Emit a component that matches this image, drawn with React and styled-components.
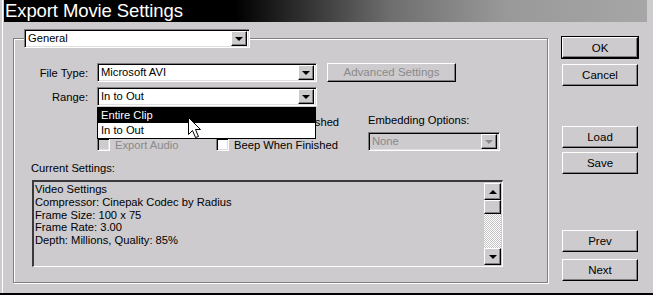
import React from 'react';
import styled, { createGlobalStyle, css } from 'styled-components';

const GlobalStyle = createGlobalStyle`
  html, body {
    margin: 0;
    padding: 0;
    background: #cdcbce;
  }
  body {
    font-family: "Liberation Sans", Arial, sans-serif;
    font-size: 11.2px;
    color: #000;
  }
`;

const BG = '#cdcbce';

const raised = css`
  border: 1px solid;
  border-color: #fff #000 #000 #fff;
  box-shadow: inset -1px -1px 0 #808080;
`;

const sunken = css`
  border: 1px solid;
  border-color: #808080 #fff #fff #808080;
  box-shadow: inset 1px 1px 0 #000, inset -1px -1px 0 #dfdfdf;
`;

const Window = styled.div`
  width: 653px;
  height: 295px;
  box-sizing: border-box;
  padding: 0 6px 0 4px;
  background: ${BG};
  box-shadow: inset 2px 0 0 ${BG}, inset 3px 0 0 #fff;
  border-bottom: 2px solid #000;
  display: flex;
  flex-direction: column;
`;

const TitleBar = styled.div`
  height: 22px;
  display: flex;
  align-items: center;
  padding-left: 1px;
  background: linear-gradient(to right, #000 0%, #000 36%, #6e6e6e 60%, #999 78%, #a6a6a6 100%);
`;

const Title = styled.span`
  color: #fff;
  font-size: 18.5px;
  letter-spacing: -0.1px;
  line-height: 22px;
`;

const Body = styled.div`
  flex: 1;
  display: flex;
  padding-left: 9px;
`;

const Group = styled.div`
  width: 535px;
  box-sizing: border-box;
  margin-top: 16px;
  height: 245px;
  border: 1px solid #808080;
  box-shadow: inset 1px 1px 0 #fff, 1px 1px 0 #fff;
  display: flex;
  flex-direction: column;
`;

const Header = styled.div`
  margin: -10px 0 0 10px;
`;

const SelectBox = styled.div`
  ${sunken};
  box-sizing: border-box;
  width: ${p => p.$w}px;
  height: 19px;
  background: ${p => (p.$disabled ? BG : '#fff')};
  color: ${p => (p.$disabled ? '#8a8a8a' : '#000')};
  display: flex;
  align-items: center;
  padding: 2px 2px 2px 3px;
  line-height: 15px;
`;

const SelectText = styled.span`
  flex: 1;
`;

const ArrowBtn = styled.span`
  ${raised};
  box-sizing: border-box;
  width: 16px;
  height: 15px;
  background: ${BG};
  display: flex;
  align-items: center;
  justify-content: center;
  &::after {
    content: '';
    border-left: 4px solid transparent;
    border-right: 4px solid transparent;
    border-top: 4px solid ${p => (p.$disabled ? '#8a8a8a' : '#000')};
    margin-top: 1px;
  }
`;

const Select = ({ w, disabled, children }) => (
  <SelectBox $w={w} $disabled={disabled}>
    <SelectText>{children}</SelectText>
    <ArrowBtn $disabled={disabled} />
  </SelectBox>
);

const FormRow = styled.div`
  display: flex;
  align-items: center;
  margin-top: ${p => p.$top}px;
  height: 19px;
`;

const Label = styled.span`
  width: 74px;
  text-align: right;
  margin-right: 9px;
`;

const PushButton = styled.button`
  ${raised};
  font: inherit;
  font-size: 11.5px;
  background: ${BG};
  color: ${p => (p.disabled ? '#8a8a8a' : '#000')};
  width: ${p => p.$w}px;
  height: ${p => p.$h || 22}px;
  padding: 0;
  margin: ${p => p.$m || 0};
  ${p => p.$default && css`
    outline: 1px solid #000;
    outline-offset: 0;
  `}
`;

const DropWrap = styled.div`
  position: relative;
`;

const Menu = styled.div`
  position: absolute;
  left: 0;
  top: 20px;
  width: 219px;
  box-sizing: border-box;
  border: 1px solid #000;
  background: #fff;
  z-index: 2;
`;

const MenuItem = styled.div`
  height: 15px;
  line-height: 15px;
  padding-left: 3px;
  background: ${p => (p.$active ? '#000' : '#fff')};
  color: ${p => (p.$active ? '#fff' : '#000')};
`;

const Cursor = styled.svg`
  position: absolute;
  left: 91px;
  top: 30px;
  z-index: 3;
`;

const Options = styled.div`
  display: flex;
  margin: 7px 0 0 83px;
`;

const CheckGrid = styled.div`
  display: grid;
  grid-template-columns: 119px 152px;
  row-gap: 10px;
  padding-top: 2px;
  align-content: start;
`;

const Check = styled.label`
  display: flex;
  align-items: center;
  height: 13px;
  color: ${p => (p.$disabled ? '#8a8a8a' : '#000')};
  white-space: nowrap;
`;

const Box = styled.span`
  ${sunken};
  box-sizing: border-box;
  width: 13px;
  height: 13px;
  margin-right: 5px;
  background: ${p => (p.$disabled ? BG : '#fff')};
`;

const Embedding = styled.div`
  display: flex;
  flex-direction: column;
  gap: 4px;
`;

const LineLabel = styled.div`
  line-height: 15px;
  margin: ${p => p.$m || 0};
`;

const SettingsBox = styled.div`
  display: flex;
  box-sizing: border-box;
  width: 471px;
  height: 87px;
  margin: 4px 0 0 18px;
  border-top: 2px solid #3a3a3a;
  border-left: 2px solid #3a3a3a;
  border-right: 1px solid #fff;
  border-bottom: 1px solid #fff;
`;

const SettingsText = styled.div`
  flex: 1;
  padding: 1px 0 0 1px;
  line-height: 12.75px;
`;

const ScrollBar = styled.div`
  width: 17px;
  display: flex;
  flex-direction: column;
  padding: 1px 1px 1px 0;
`;

const ScrollBtn = styled.div`
  ${raised};
  box-sizing: border-box;
  height: ${p => p.$h}px;
  background: ${BG};
  display: flex;
  align-items: center;
  justify-content: center;
  &::after {
    content: '';
    border-left: 4px solid transparent;
    border-right: 4px solid transparent;
    ${p => p.$dir === 'up' && 'border-bottom: 4px solid #000;'}
    ${p => p.$dir === 'down' && 'border-top: 4px solid #000;'}
  }
`;

const Track = styled.div`
  flex: 1;
  background: repeating-conic-gradient(#fff 0 25%, #c4c4c4 0 50%) 0 0 / 2px 2px;
`;

const ButtonColumn = styled.div`
  display: flex;
  flex-direction: column;
  margin: 15px 0 0 14px;
`;

export default function App() {
  return (
    <>
      <GlobalStyle />
      <Window>
        <TitleBar>
          <Title>Export Movie Settings</Title>
        </TitleBar>
        <Body>
          <Group>
            <Header>
              <Select w={226}>General</Select>
            </Header>
            <FormRow $top={15}>
              <Label>File Type:</Label>
              <Select w={220}>Microsoft AVI</Select>
              <PushButton disabled $w={129} $h={19} $m="-1px 0 0 10px">Advanced Settings</PushButton>
            </FormRow>
            <FormRow $top={5}>
              <Label>Range:</Label>
              <DropWrap>
                <Select w={220}>In to Out</Select>
                <Menu>
                  <MenuItem $active>Entire Clip</MenuItem>
                  <MenuItem>In to Out</MenuItem>
                </Menu>
                <Cursor width="16" height="22" viewBox="0 0 16 22">
                  <path d="M0.5 0.5 L0.5 17.5 L4.5 13.5 L7.5 20.5 L10.5 19.5 L7.5 12.5 L12.5 12.5 Z" fill="#fff" stroke="#000" strokeWidth="1" />
                </Cursor>
              </DropWrap>
            </FormRow>
            <Options>
              <CheckGrid>
                <Check><Box />Export Video</Check>
                <Check><Box />Open When Finished</Check>
                <Check $disabled><Box $disabled />Export Audio</Check>
                <Check><Box />Beep When Finished</Check>
              </CheckGrid>
              <Embedding>
                <LineLabel>Embedding Options:</LineLabel>
                <Select w={132} disabled>None</Select>
              </Embedding>
            </Options>
            <LineLabel $m="10px 0 0 17px">Current Settings:</LineLabel>
            <SettingsBox>
              <SettingsText>
                Video Settings<br />
                Compressor: Cinepak Codec by Radius<br />
                Frame Size: 100 x 75<br />
                Frame Rate: 3.00<br />
                Depth: Millions, Quality: 85%
              </SettingsText>
              <ScrollBar>
                <ScrollBtn $h={17} $dir="up" />
                <ScrollBtn $h={14} />
                <Track />
                <ScrollBtn $h={17} $dir="down" />
              </ScrollBar>
            </SettingsBox>
          </Group>
          <ButtonColumn>
            <PushButton $w={76} $h={21} $default>OK</PushButton>
            <PushButton $w={76} $m="6px 0 0 0">Cancel</PushButton>
            <PushButton $w={76} $m="40px 0 0 0">Load</PushButton>
            <PushButton $w={76} $m="4px 0 0 0">Save</PushButton>
            <PushButton $w={76} $m="56px 0 0 0">Prev</PushButton>
            <PushButton $w={76} $m="7px 0 0 0">Next</PushButton>
          </ButtonColumn>
        </Body>
      </Window>
    </>
  );
}
